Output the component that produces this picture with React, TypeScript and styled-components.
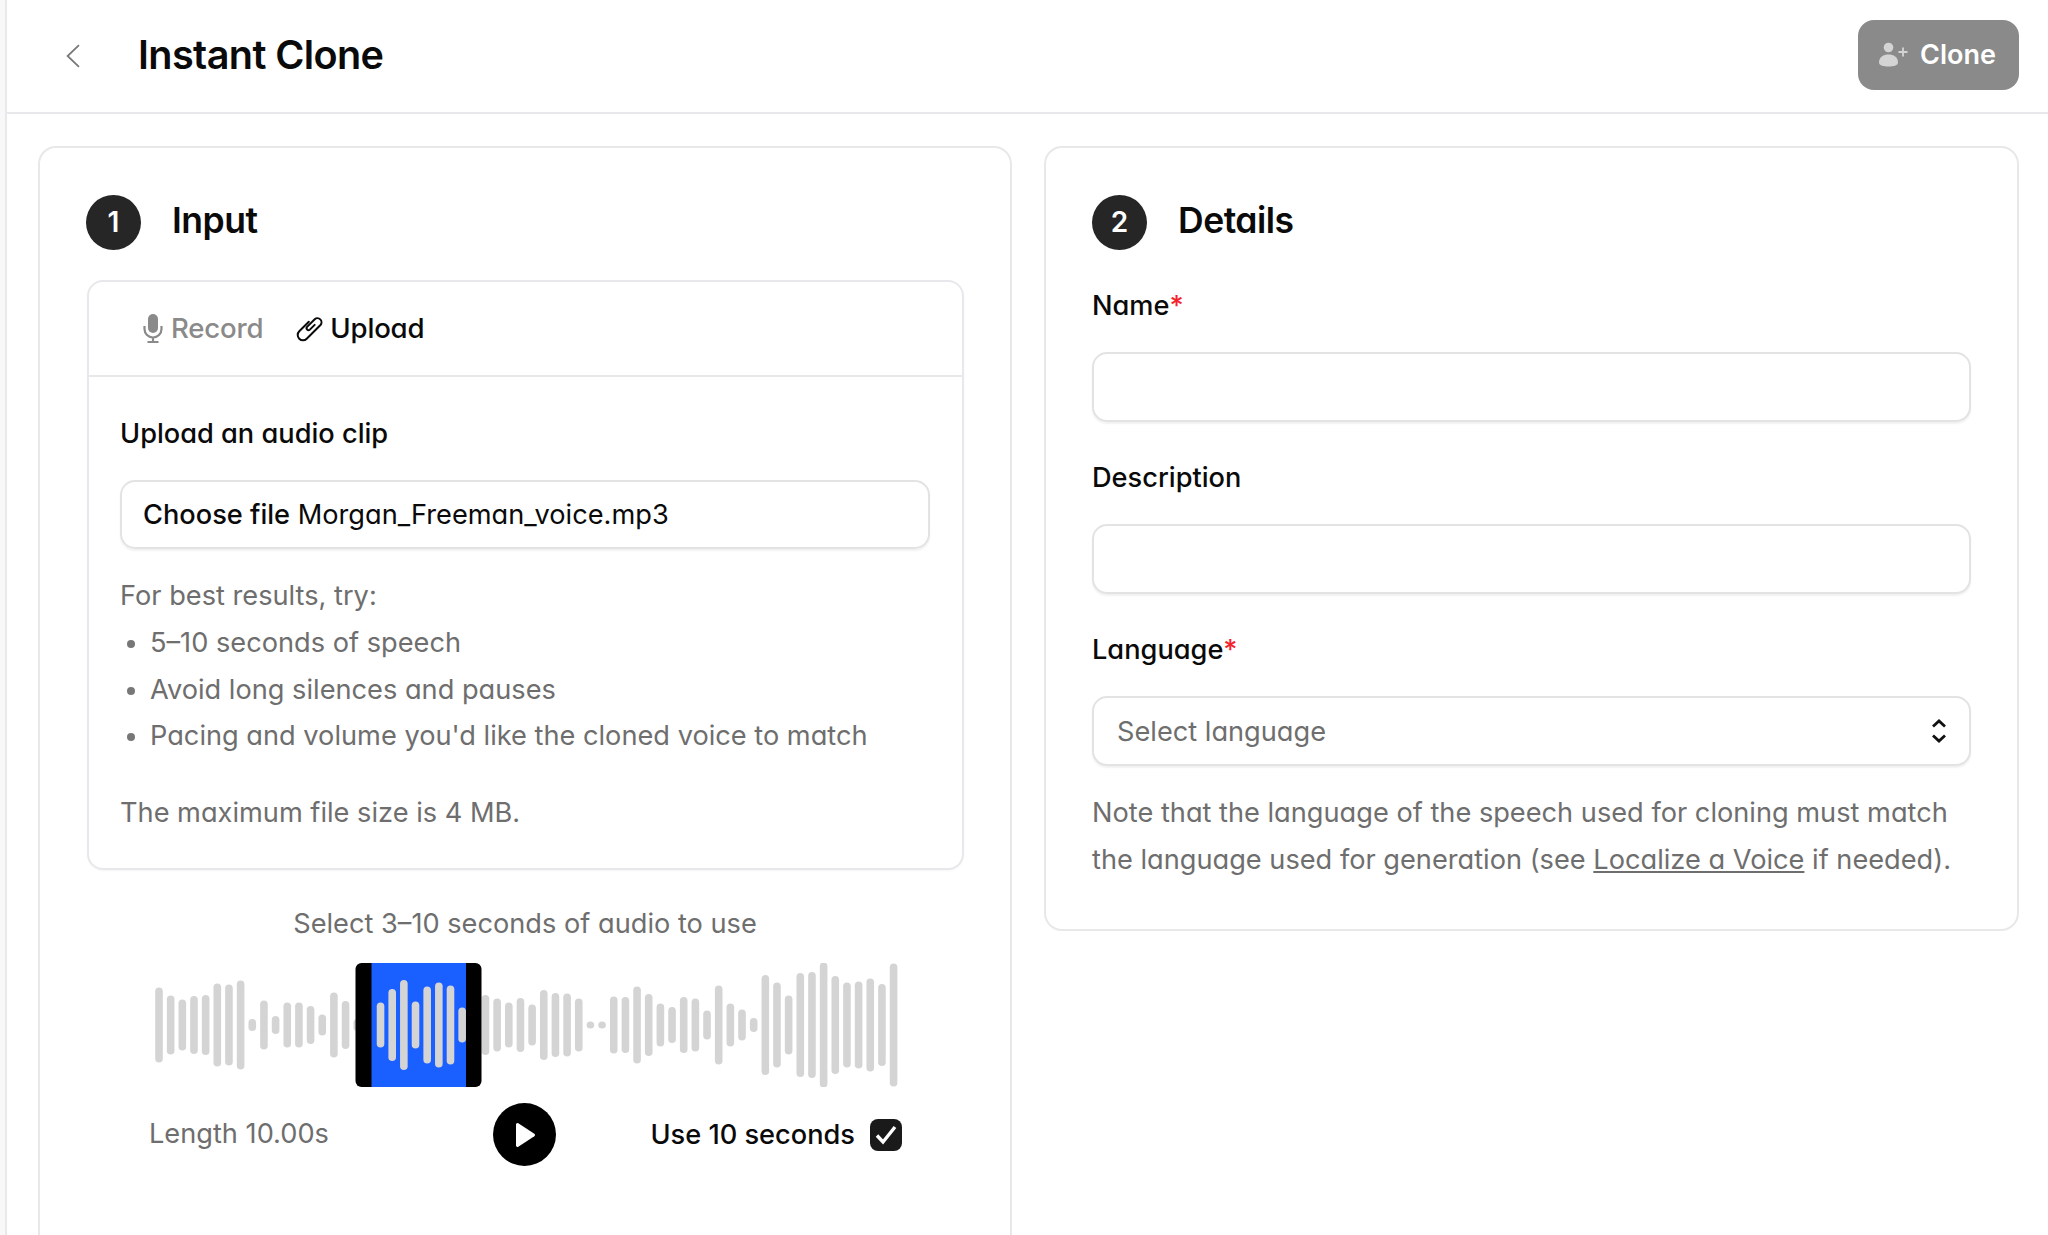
import React from 'react';
import styled, { createGlobalStyle } from 'styled-components';

const GlobalStyle = createGlobalStyle`
  html, body {
    margin: 0;
    padding: 0;
    height: 100%;
    overflow: hidden;
    background: #f8f8f8;
    font-family: Inter, 'Liberation Sans', sans-serif;
    font-feature-settings: 'cv11' 1;
    color: #0a0a0a;
  }
  * { box-sizing: border-box; }
`;

const Shell = styled.div`
  height: 1235px;
  overflow: hidden;
  border-left: 2px solid #e9e9ec;
  margin-left: 5px;
  background: #fff;
`;

const Header = styled.header`
  height: 114px;
  border-bottom: 2px solid #e8e8ec;
  display: flex;
  align-items: center;
  padding: 0 29px 0 56px;
`;

const BackButton = styled.button`
  border: 0;
  background: none;
  padding: 0;
  width: 20px;
  height: 26px;
  display: flex;
  align-items: center;
  justify-content: center;
  color: #777;
`;

const Title = styled.h1`
  margin: 0 0 3px 55px;
  font-size: 39.6px;
  font-weight: 600;
  font-feature-settings: normal;
  letter-spacing: -0.6px;
  flex: 1;
`;

const CloneButton = styled.button`
  width: 161px;
  height: 70px;
  margin-bottom: 2px;
  border: 0;
  border-radius: 16px;
  background: #8a8a8a;
  color: #fff;
  font: 600 27px Inter, sans-serif;
  display: flex;
  align-items: center;
  gap: 11px;
  padding: 0 0 2px 21px;
`;

const Columns = styled.main`
  display: grid;
  grid-template-columns: 974px 975px;
  gap: 32px;
  align-items: start;
  padding: 32px 0 0 31px;
`;

const Card = styled.section`
  border: 2px solid #e8e8e8;
  border-radius: 18px;
  padding: 47px 46px 46px;
  background: #fff;
`;

const SectionHead = styled.div`
  display: flex;
  align-items: center;
  gap: 31px;
  height: 55px;
  margin-bottom: 31px;
`;

const StepBadge = styled.span`
  width: 55px;
  height: 55px;
  padding-bottom: 2px;
  border-radius: 50%;
  background: #262626;
  color: #fff;
  font-size: 28px;
  font-weight: 600;
  display: flex;
  align-items: center;
  justify-content: center;
`;

const SectionTitle = styled.h2`
  margin: 0 0 4px;
  font-size: 35.5px;
  font-weight: 600;
  letter-spacing: -0.5px;
`;

const InputBox = styled.div`
  margin: -1px 0 0 1px;
  border: 2px solid #e8e8ec;
  border-radius: 16px;
  box-shadow: 0 1px 2px rgba(0, 0, 0, 0.04);
`;

const Tabs = styled.div`
  height: 95px;
  border-bottom: 2px solid #e8e8e8;
  display: flex;
  align-items: center;
  gap: 33px;
  padding: 0 0 2px 54px;
`;

const Tab = styled.div<{ $active?: boolean }>`
  display: flex;
  align-items: center;
  gap: ${({ $active }) => ($active ? '6px' : '8px')};
  font-size: 27.6px;
  font-weight: 500;
  letter-spacing: -0.2px;
  color: ${({ $active }) => ($active ? '#0a0a0a' : '#8a8a8a')};
`;

const BoxBody = styled.div`
  padding: 32px 32px 32px 31px;
`;

const FieldLabel = styled.div`
  padding-top: 1px;
  margin-bottom: -1px;
  font-size: 27.2px;
  font-weight: 500;
  line-height: 47px;
`;

const Required = styled.span`
  color: #f5222d;
`;

const FileField = styled.div`
  height: 69px;
  margin-top: 24px;
  border: 2px solid #e3e3e3;
  border-radius: 15px;
  box-shadow: 0 2px 2px rgba(0, 0, 0, 0.06);
  display: flex;
  align-items: center;
  padding-left: 21px;
  font-size: 27.2px;
  white-space: pre;
`;

const FileButtonLabel = styled.span`
  font-weight: 500;
`;

const Hint = styled.p<{ $gap?: number }>`
  margin: ${({ $gap }) => $gap ?? 0}px 0 0;
  font-size: 27.2px;
  line-height: 47px;
  color: #6e6e6e;
`;

const HintList = styled.ul`
  list-style: none;
  margin: 0;
  padding: 1px 0 0;
`;

const HintItem = styled.li`
  position: relative;
  padding-left: 30px;
  font-size: 27.2px;
  line-height: 46.7px;
  color: #6e6e6e;

  &::before {
    content: '';
    position: absolute;
    left: 7px;
    top: 20px;
    width: 8px;
    height: 8px;
    border-radius: 50%;
    background: #777;
  }
`;

const SelectCaption = styled.div`
  margin-top: 30px;
  text-align: center;
  font-size: 27.2px;
  line-height: 47px;
  color: #6e6e6e;
`;

const WaveWrap = styled.div`
  margin-top: 16px;
  padding-left: 3px;
  display: flex;
  justify-content: center;
`;

const Controls = styled.div`
  margin: 16px 62px 0 61px;
  display: grid;
  grid-template-columns: 1fr auto 1fr;
  align-items: center;
  padding-bottom: 80px;
`;

const LengthText = styled.div`
  font-size: 27.2px;
  color: #6e6e6e;
  padding: 0 0 2px 2px;
`;

const PlayButton = styled.button`
  width: 63px;
  height: 63px;
  padding: 0;
  border: 0;
  border-radius: 50%;
  background: #000;
  display: flex;
  align-items: center;
  justify-content: center;
`;

const UseToggle = styled.label`
  display: flex;
  align-items: center;
  justify-content: flex-end;
  gap: 15px;
  font-size: 27.2px;
  font-weight: 500;
`;

const CheckBox = styled.span`
  width: 32px;
  height: 32px;
  border-radius: 8px;
  background: #1a1a1a;
  display: flex;
  align-items: center;
  justify-content: center;
`;

const TextField = styled.div`
  height: 70px;
  margin: 24px 0 31px;
  border: 2px solid #e3e3e3;
  border-radius: 15px;
  box-shadow: 0 2px 2px rgba(0, 0, 0, 0.06);
  background: #fff;
`;

const SelectField = styled(TextField)`
  display: flex;
  align-items: center;
  justify-content: space-between;
  margin-bottom: 23px;
  padding: 0 21px 0 23px;
  font-size: 27.2px;
  color: #6e6e6e;
`;

const Note = styled.p`
  margin: 0;
  font-size: 27.2px;
  line-height: 47px;
  color: #6e6e6e;
  white-space: nowrap;
`;

const NoteLink = styled.a`
  color: #6e6e6e;
  text-decoration: underline;
`;

const heights = [
  75, 59, 51, 58, 60, 83, 81, 89, 12, 49, 18, 45, 45, 38, 21, 65, 48, 12, 80, 45, 72, 90, 47, 77, 85, 79, 35, 60,
  60, 53, 45, 54, 41, 70, 64, 63, 53, 7, 7, 57, 56, 77, 62, 43, 36, 56, 53, 29, 79, 43, 31, 14, 100, 85, 59, 104,
  106, 125, 98, 85, 87, 93, 82, 123,
];

const Waveform = () => {
  const bar = (h: number, i: number) => (
    <rect key={i} x={4 + i * 11.66 - 3.8} y={62 - h / 2} width={7.6} height={h} rx={3.8} fill="#d4d4d4" />
  );
  return (
    <svg width="744" height="124" viewBox="0 0 744 124">
      {heights.map(bar)}
      <rect x="200.5" y="0" width="126" height="124" rx="6" fill="#000" />
      <rect x="216.5" y="0" width="94.5" height="124" fill="#1a5fff" />
      {heights.map((h, i) => (i > 18 && i < 27 ? bar(h, i) : null))}
    </svg>
  );
};

const ChevronLeft = () => (
  <svg width="18" height="26" viewBox="0 0 16 24" fill="none" stroke="currentColor" strokeWidth="1.6">
    <path d="M13.5 2 L3 12 L13.5 22" />
  </svg>
);

const UserPlus = () => (
  <svg width="30" height="28" viewBox="0 0 30 28" fill="#d4d4d4">
    <circle cx="9.5" cy="7.5" r="4.8" />
    <path d="M0 22.5C0 17 4.5 14.5 9.5 14.5S19 17 19 22.5C19 25.5 14.5 26.5 9.5 26.5S0 25.5 0 22.5Z" />
    <path d="M24 7.5v9M19.5 12h9" stroke="#d4d4d4" strokeWidth="1.8" fill="none" />
  </svg>
);

const MicIcon = () => (
  <svg width="20" height="30" viewBox="0 0 20 30" fill="none" stroke="#8a8a8a" strokeWidth="2.2">
    <rect x="5" y="1" width="10" height="19" rx="5" fill="#8a8a8a" stroke="none" />
    <path d="M1.5 13v3a8.5 8.5 0 0 0 17 0v-3M10 25v4M4.5 29h11" />
  </svg>
);

const ClipIcon = () => (
  <svg width="28" height="28" viewBox="0 0 24 24" fill="none" stroke="#0a0a0a" strokeWidth="1.7" strokeLinecap="round">
    <path d="M11 6.6 2.8 14.8A4.5 4.5 0 0 0 9.2 21.2L20.97 9.43A3.5 3.5 0 0 0 16.03 4.49L9.5 11A1.7 1.7 0 0 0 11.9 13.4L16 9.3" />
  </svg>
);

const PlayIcon = () => (
  <svg width="24" height="26" viewBox="0 0 24 26">
    <path d="M3 2.5v21a1.5 1.5 0 0 0 2.3 1.2l16-10.5a1.5 1.5 0 0 0 0-2.5L5.3 1.3A1.5 1.5 0 0 0 3 2.5Z" fill="#fff" />
  </svg>
);

const CheckIcon = () => (
  <svg width="22" height="20" viewBox="0 0 22 20" fill="none" stroke="#fff" strokeWidth="3.4">
    <path d="M2 10.5l6 6.5L20 2" />
  </svg>
);

const UpDownIcon = () => (
  <svg width="18" height="26" viewBox="0 0 18 26" fill="none" stroke="#111" strokeWidth="2.8">
    <path d="M3 8.5 9 3l6 5.5M3 17.5 9 23l6-5.5" />
  </svg>
);

const App = () => (
  <>
    <GlobalStyle />
    <Shell>
      <Header>
        <BackButton>
          <ChevronLeft />
        </BackButton>
        <Title>Instant Clone</Title>
        <CloneButton>
          <UserPlus />
          Clone
        </CloneButton>
      </Header>
      <Columns>
        <Card>
          <SectionHead>
            <StepBadge>1</StepBadge>
            <SectionTitle>Input</SectionTitle>
          </SectionHead>
          <InputBox>
            <Tabs>
              <Tab>
                <MicIcon />
                Record
              </Tab>
              <Tab $active>
                <ClipIcon />
                Upload
              </Tab>
            </Tabs>
            <BoxBody>
              <FieldLabel>Upload an audio clip</FieldLabel>
              <FileField>
                <FileButtonLabel>Choose file</FileButtonLabel> Morgan_Freeman_voice.mp3
              </FileField>
              <Hint $gap={23}>For best results, try:</Hint>
              <HintList>
                <HintItem>5–10 seconds of speech</HintItem>
                <HintItem>Avoid long silences and pauses</HintItem>
                <HintItem>Pacing and volume you'd like the cloned voice to match</HintItem>
              </HintList>
              <Hint $gap={29}>The maximum file size is 4 MB.</Hint>
            </BoxBody>
          </InputBox>
          <SelectCaption>Select 3–10 seconds of audio to use</SelectCaption>
          <WaveWrap>
            <Waveform />
          </WaveWrap>
          <Controls>
            <LengthText>Length 10.00s</LengthText>
            <PlayButton>
              <PlayIcon />
            </PlayButton>
            <UseToggle>
              Use 10 seconds
              <CheckBox>
                <CheckIcon />
              </CheckBox>
            </UseToggle>
          </Controls>
        </Card>
        <Card>
          <SectionHead>
            <StepBadge>2</StepBadge>
            <SectionTitle>Details</SectionTitle>
          </SectionHead>
          <FieldLabel>
            Name<Required>*</Required>
          </FieldLabel>
          <TextField />
          <FieldLabel>Description</FieldLabel>
          <TextField />
          <FieldLabel>
            Language<Required>*</Required>
          </FieldLabel>
          <SelectField>
            Select language
            <UpDownIcon />
          </SelectField>
          <Note>Note that the language of the speech used for cloning must match</Note>
          <Note>
            the language used for generation (see <NoteLink>Localize a Voice</NoteLink> if needed).
          </Note>
        </Card>
      </Columns>
    </Shell>
  </>
);

export default App;
